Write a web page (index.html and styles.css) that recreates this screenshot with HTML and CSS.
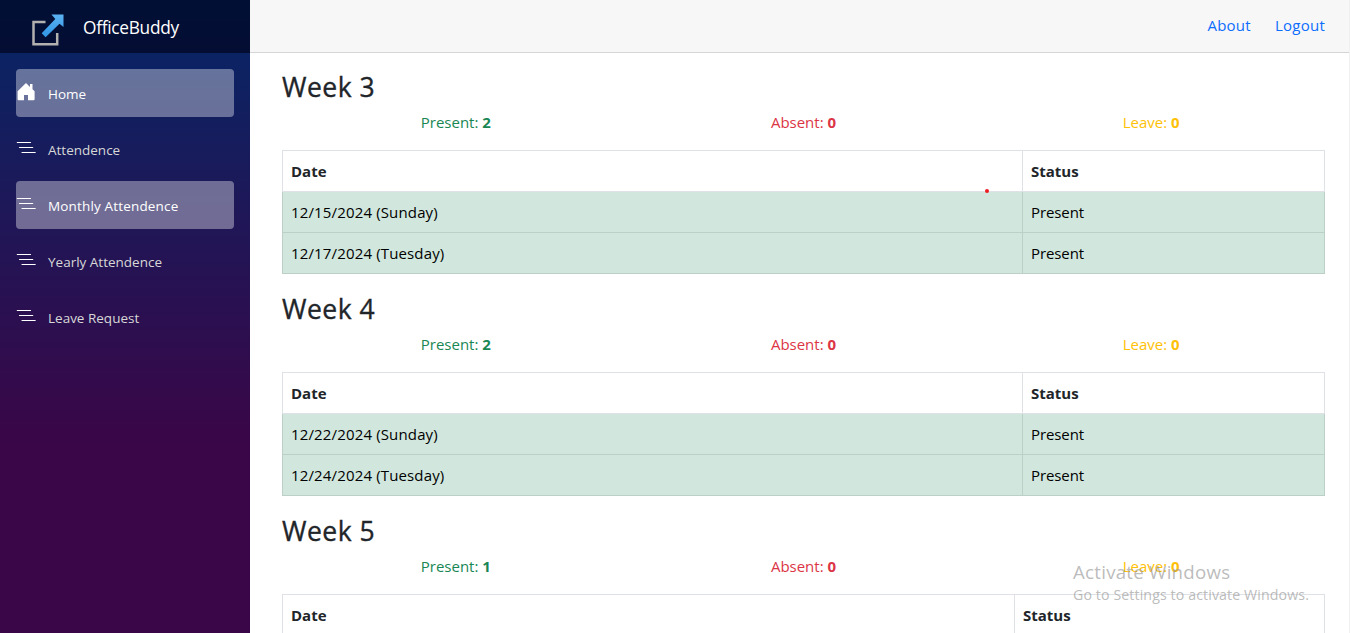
FILE: index.html
```html
<!DOCTYPE html>
<html lang="en">
<head>
<meta charset="utf-8">
<title>OfficeBuddy</title>
<link rel="stylesheet" href="styles.css">
</head>
<body>
<svg class="defs" width="0" height="0" aria-hidden="true">
  <symbol id="nested" viewBox="0 0 20 20"><path d="M1.3 4.5H14.5M3.5 9.5H16.7M6 14.5H19.2" fill="none" stroke="#fff" stroke-width="1.2" stroke-linecap="round"/></symbol>
</svg>
<div class="page">
  <aside class="sidebar">
    <div class="brand">
      <svg class="logo" width="36" height="36" viewBox="0 0 36 36">
        <defs><linearGradient id="arrow" x1="0" y1="0" x2="0" y2="1"><stop offset="0" stop-color="#5bb2f2"/><stop offset="1" stop-color="#2f95e6"/></linearGradient></defs>
        <path d="M15.5 12H3.5V34.2H27.2V23" fill="none" stroke="#b3b1b0" stroke-width="2.5"/>
        <path d="M21.5 4.6H33.5V17L29.5 13.7L15.6 27.2L11.7 23.3L25.3 9Z" fill="url(#arrow)"/>
      </svg>
      <span class="brand-name">OfficeBuddy</span>
    </div>
    <nav class="menu">
      <a class="item active"><svg class="icon" width="20" height="20" viewBox="0 0 20 20"><path d="M10 1L14 4.9V1.9H16.5V7.2L18.6 9.2V17.2Q18.6 18.3 17.6 18.3H12V13H8V18.3H2.6Q1.6 18.3 1.6 17.2V9.2Z" fill="#fff"/></svg><span>Home</span></a>
      <a class="item"><svg class="icon" width="20" height="20"><use href="#nested"/></svg><span>Attendence</span></a>
      <a class="item active"><svg class="icon" width="20" height="20"><use href="#nested"/></svg><span class="wide">Monthly Attendence</span></a>
      <a class="item"><svg class="icon" width="20" height="20"><use href="#nested"/></svg><span>Yearly Attendence</span></a>
      <a class="item"><svg class="icon" width="20" height="20"><use href="#nested"/></svg><span>Leave Request</span></a>
    </nav>
  </aside>
  <main class="main">
    <header class="topbar"><a>About</a><a>Logout</a></header>
    <div class="content">
      <section class="week">
        <h3>Week 3</h3>
        <div class="stats"><div class="present">Present: <b>2</b></div><div class="absent">Absent: <b>0</b></div><div class="leave">Leave: <b>0</b></div></div>
        <table>
          <thead><tr><th class="date">Date</th><th>Status</th></tr></thead>
          <tbody>
            <tr><td>12/15/2024 (Sunday)</td><td>Present</td></tr>
            <tr><td>12/17/2024 (Tuesday)</td><td>Present</td></tr>
          </tbody>
        </table>
        <i class="pointer"></i>
      </section>
      <section class="week">
        <h3>Week 4</h3>
        <div class="stats"><div class="present">Present: <b>2</b></div><div class="absent">Absent: <b>0</b></div><div class="leave">Leave: <b>0</b></div></div>
        <table>
          <thead><tr><th class="date">Date</th><th>Status</th></tr></thead>
          <tbody>
            <tr><td>12/22/2024 (Sunday)</td><td>Present</td></tr>
            <tr><td>12/24/2024 (Tuesday)</td><td>Present</td></tr>
          </tbody>
        </table>
      </section>
      <section class="week">
        <h3>Week 5</h3>
        <div class="stats"><div class="present">Present: <b>1</b></div><div class="absent">Absent: <b>0</b></div><div class="leave">Leave: <b>0</b></div></div>
        <table>
          <thead><tr><th class="date narrow">Date</th><th>Status</th></tr></thead>
        </table>
      </section>
    </div>
  </main>
</div>
<div class="watermark"><div class="wm-title">Activate Windows</div><div class="wm-sub">Go to Settings to activate Windows.</div></div>
</body>
</html>
```
FILE: styles.css
```css
* { box-sizing: border-box; }
body { margin: 0; height: 633px; overflow: hidden; background: #fff; color: #212529; font: 15px/24px "Open Sans", "Noto Sans", sans-serif; }
.defs { position: absolute; }
.page { display: flex; height: 633px; }
.sidebar { width: 250px; flex: none; background: linear-gradient(180deg, rgb(5, 39, 103) 0%, #3a0647 70%); }
.brand { display: flex; height: 53px; padding: 10px 0 0 30px; background: rgba(0, 0, 20, .6); color: #fff; }
.logo { flex: none; }
.brand-name { margin-left: 17px; padding-top: 3px; font-size: 17.3px; line-height: 30px; letter-spacing: -.28px; }
.menu { display: flex; flex-direction: column; gap: 8px; padding: 16px 16px 0; }
.item { display: flex; align-items: center; height: 48px; border-radius: 4px; color: #d7d7d7; font-size: 13.5px; line-height: 48px; }
.item span { padding-top: 2px; }
.item.active { color: #fff; background: rgba(255, 255, 255, .37); }
.item .wide { letter-spacing: .16px; }
.icon { flex: none; margin: -3px 12px 0 0; }
.main { flex: 1; min-width: 0; border-right: 1px solid #f0f0f0; }
.topbar { display: flex; justify-content: flex-end; gap: 24px; height: 53px; padding: 13px 24px 0 0; background: #f7f7f7; border-bottom: 1px solid #d6d5d5; color: #0d6efd; letter-spacing: .25px; }
.content { height: 580px; overflow: hidden; padding: 15px 24px 0 32px; }
.week { position: relative; height: 222px; }
h3 { margin: 0; padding-top: 2px; height: 42px; font-size: 26.5px; font-weight: 500; line-height: 34px; letter-spacing: .5px; -webkit-text-stroke: .35px #212529; }
.stats { display: grid; grid-template-columns: repeat(3, 1fr); margin-bottom: 16px; text-align: center; }
.present { color: #198754; }
.absent { color: #dc3545; }
.leave { color: #ffc107; }
b, th { font-weight: 700; }
table { width: 100%; table-layout: fixed; border-collapse: collapse; }
th, td { height: 41px; padding: 8px; border: 1px solid #dee2e6; text-align: left; }
td { color: #000; background: #d1e7dd; border-color: #bcd0c7; }
td:first-child { letter-spacing: .15px; }
td:last-child { letter-spacing: -.1px; }
.date { width: 740px; }
.date.narrow { width: 732px; }
.pointer { position: absolute; left: 702.5px; top: 121px; width: 4px; height: 4px; border-radius: 50%; background: #ed1c24; }
.watermark { position: absolute; left: 1073px; top: 559px; color: rgba(150, 150, 150, .65); white-space: nowrap; }
.wm-title { font-size: 18.7px; line-height: 26px; letter-spacing: .25px; }
.wm-sub { font-size: 14.2px; line-height: 20px; letter-spacing: .1px; }
```
